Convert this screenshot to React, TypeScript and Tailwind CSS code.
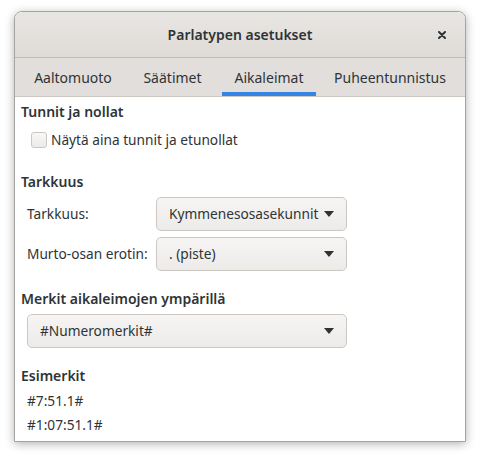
import React from "react";

const font = { fontFamily: '"Noto Sans", "Open Sans", sans-serif' };

function Arrow() {
  return (
    <svg width="10" height="6" viewBox="0 0 10 6" className="shrink-0">
      <path d="M0 0 L10 0 L5 6 Z" fill="#2e3436" />
    </svg>
  );
}

function Combo({ value, className }: { value: string; className: string }) {
  return (
    <div
      className={`h-[34px] flex items-center justify-between pl-[12px] pr-[12px] rounded-[5px] border border-[#cdc7c2] bg-gradient-to-b from-[#f6f5f4] to-[#edebe9] text-[13.7px] text-[#2e3436] ${className}`}
    >
      <span>{value}</span>
      <Arrow />
    </div>
  );
}

function Heading({ children, className }: { children: string; className: string }) {
  return <div className={`h-[20px] leading-[20px] text-[14px] font-semibold text-[#2e3436] ${className}`}>{children}</div>;
}

export default function App() {
  const tabs = [
    { label: "Aaltomuoto", w: "w-[96px] ml-[10px]" },
    { label: "Säätimet", w: "w-[79px] ml-[12px]" },
    { label: "Aikaleimat", w: "w-[94px] ml-[10px]" },
    { label: "Puheentunnistus", w: "w-[128px] ml-[10px]" },
  ];
  return (
    <div className="w-[480px] h-[459px] bg-white pt-[11px] pl-[14px]" style={font}>
      <div className="w-[452px] h-[431px] flex flex-col rounded-t-[8px] border border-[#a8a39e] bg-white shadow-[0_2px_10px_rgba(0,0,0,0.3)] overflow-hidden">
        <div className="h-[46px] shrink-0 relative flex items-center justify-center bg-gradient-to-b from-[#e8e6e3] to-[#dfdbd7] border-b border-[#c0bbb6]">
          <span className="text-[14px] font-semibold text-[#2e3436]">Parlatypen asetukset</span>
          <svg width="8" height="8" viewBox="0 0 8 8" className="absolute right-[19px] top-[19px]">
            <path d="M1 1 L7 7 M7 1 L1 7" stroke="#2e3436" strokeWidth="2" strokeLinecap="round" />
          </svg>
        </div>
        <div className="h-[39px] shrink-0 flex items-stretch bg-[#e1dedb] border-b border-[#cdc7c2]">
          {tabs.map((t, i) => (
            <div
              key={t.label}
              className={`${t.w} flex items-center justify-center text-[14px] text-[#2e3436] border-b-[4px] pt-[4px] ${
                i === 2 ? "border-[#3584e4]" : "border-transparent"
              }`}
            >
              {t.label}
            </div>
          ))}
        </div>
        <div className="flex flex-col pl-[6px] pt-[5px] text-[13.7px] text-[#2e3436]">
          <Heading className="">Tunnit ja nollat</Heading>
          <div className="h-[20px] mt-[8px] flex items-center gap-[4px] pl-[10px]">
            <div className="w-[16px] h-[16px] rounded-[3px] border border-[#cdc7c2] bg-gradient-to-b from-[#f8f7f7] to-[#edebe9]" />
            <span>Näytä aina tunnit ja etunollat</span>
          </div>
          <Heading className="mt-[22px]">Tarkkuus</Heading>
          <div className="mt-[5px] flex items-center pl-[6px]">
            <span className="w-[129px]">Tarkkuus:</span>
            <Combo value="Kymmenesosasekunnit" className="w-[191px]" />
          </div>
          <div className="mt-[6px] flex items-center pl-[6px]">
            <span className="w-[129px]">Murto-osan erotin:</span>
            <Combo value=". (piste)" className="w-[191px]" />
          </div>
          <Heading className="mt-[18px]">Merkit aikaleimojen ympärillä</Heading>
          <Combo value="#Numeromerkit#" className="mt-[5px] ml-[6px] w-[320px]" />
          <Heading className="mt-[18px]">Esimerkit</Heading>
          <div className="mt-[5px] pl-[6px] h-[20px] leading-[20px]">#7:51.1#</div>
          <div className="mt-[4px] pl-[6px] h-[20px] leading-[20px]">#1:07:51.1#</div>
        </div>
      </div>
    </div>
  );
}
